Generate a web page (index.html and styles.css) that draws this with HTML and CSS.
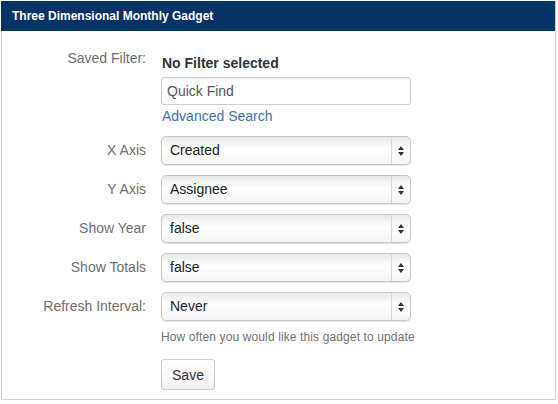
FILE: index.html
```html
<!DOCTYPE html>
<html>
<head>
<meta charset="utf-8">
<link rel="stylesheet" href="styles.css">
</head>
<body>
<div class="gadget">
  <div class="gadget-header">Three Dimensional Monthly Gadget</div>
  <form class="gadget-form">
    <div class="row row-filter">
      <label class="label label-filter">Saved Filter:</label>
      <div class="field">
        <div class="filter-name">No Filter selected</div>
        <input class="text-input" type="text" placeholder="Quick Find">
        <a class="link" href="#">Advanced Search</a>
      </div>
    </div>
    <div class="row">
      <label class="label">X Axis</label>
      <div class="field"><div class="select"><span class="select-text">Created</span><span class="select-arrow"><i class="up"></i><i class="down"></i></span></div></div>
    </div>
    <div class="row">
      <label class="label">Y Axis</label>
      <div class="field"><div class="select"><span class="select-text">Assignee</span><span class="select-arrow"><i class="up"></i><i class="down"></i></span></div></div>
    </div>
    <div class="row">
      <label class="label">Show Year</label>
      <div class="field"><div class="select"><span class="select-text">false</span><span class="select-arrow"><i class="up"></i><i class="down"></i></span></div></div>
    </div>
    <div class="row">
      <label class="label">Show Totals</label>
      <div class="field"><div class="select"><span class="select-text">false</span><span class="select-arrow"><i class="up"></i><i class="down"></i></span></div></div>
    </div>
    <div class="row row-refresh">
      <label class="label">Refresh Interval:</label>
      <div class="field">
        <div class="select"><span class="select-text">Never</span><span class="select-arrow"><i class="up"></i><i class="down"></i></span></div>
        <div class="help">How often you would like this gadget to update</div>
      </div>
    </div>
    <div class="row row-save">
      <div class="label"></div>
      <div class="field"><button class="btn" type="button">Save</button></div>
    </div>
  </form>
</div>
</body>
</html>
```
FILE: styles.css
```css
html, body {
  margin: 0;
  padding: 0;
  background: #ffffff;
}
body {
  font-family: "Liberation Sans", Arial, Helvetica, sans-serif;
  font-size: 14px;
  color: #333333;
  padding: 1px 0 0 1px;
}
.gadget {
  width: 553px;
  height: 398px;
  border: 1px solid #d3d3d3;
  border-top: 0;
}
.gadget-header {
  background: #063366;
  color: #ffffff;
  font-weight: bold;
  font-size: 12px;
  height: 30px;
  line-height: 31px;
  padding-left: 11px;
  margin: 0 0 0 -1px;
  width: 543px;
}
.gadget-form {
  padding-top: 19px;
}
.row {
  display: grid;
  grid-template-columns: 144px 250px;
  column-gap: 15px;
  margin-bottom: 10px;
}
.label {
  text-align: right;
  color: #6e6e6e;
  font-size: 14px;
  line-height: 29px;
}
.label-filter {
  line-height: 16px;
}
.field {
  display: flex;
  flex-direction: column;
  align-items: flex-start;
}
.filter-name {
  font-weight: bold;
  color: #333333;
  line-height: 16px;
  padding: 5px 0 0 1px;
  margin-bottom: 6px;
}
.text-input {
  width: 250px;
  height: 28px;
  box-sizing: border-box;
  border: 1px solid #cccccc;
  border-radius: 3px;
  padding: 0 5px;
  font-family: inherit;
  font-size: 14px;
  color: #333333;
  box-shadow: inset 0 1px 2px rgba(0,0,0,0.08);
  margin: 0;
}
.text-input::placeholder {
  color: #555555;
}
.link {
  color: #3b73af;
  text-decoration: none;
  line-height: 18px;
  margin: 2px 0 0 1px;
}
.row-filter {
  margin-bottom: 11px;
}
.select {
  width: 250px;
  height: 29px;
  box-sizing: border-box;
  border: 1px solid #c8c8c8;
  border-radius: 5px;
  background: linear-gradient(to bottom, #e9e9e9 0%, #ffffff 45%, #f4f4f4 100%);
  box-shadow: 0 1px 1px rgba(0,0,0,0.12);
  display: flex;
  align-items: stretch;
}
.select-text {
  flex: 1;
  padding-left: 8px;
  line-height: 27px;
  color: #222222;
}
.select-arrow {
  width: 18px;
  border-left: 1px solid #d6d6d6;
  display: flex;
  flex-direction: column;
  align-items: center;
  justify-content: center;
  gap: 2px;
}
.select-arrow i {
  display: block;
  width: 0;
  height: 0;
  border-left: 3px solid transparent;
  border-right: 3px solid transparent;
}
.select-arrow .up {
  border-bottom: 4px solid #333333;
}
.select-arrow .down {
  border-top: 4px solid #333333;
}
.help {
  font-size: 12px;
  letter-spacing: 0.12px;
  white-space: nowrap;
  color: #707070;
  margin-top: 9px;
  line-height: 15px;
}
.row-refresh {
  margin-bottom: 14px;
}
.btn {
  font-family: inherit;
  font-size: 14px;
  color: #333333;
  width: 54px;
  height: 31px;
  border: 1px solid #cccccc;
  border-radius: 3px;
  background: linear-gradient(to bottom, #ffffff 0%, #f2f2f2 100%);
  padding: 0;
  margin: 0;
}
```
